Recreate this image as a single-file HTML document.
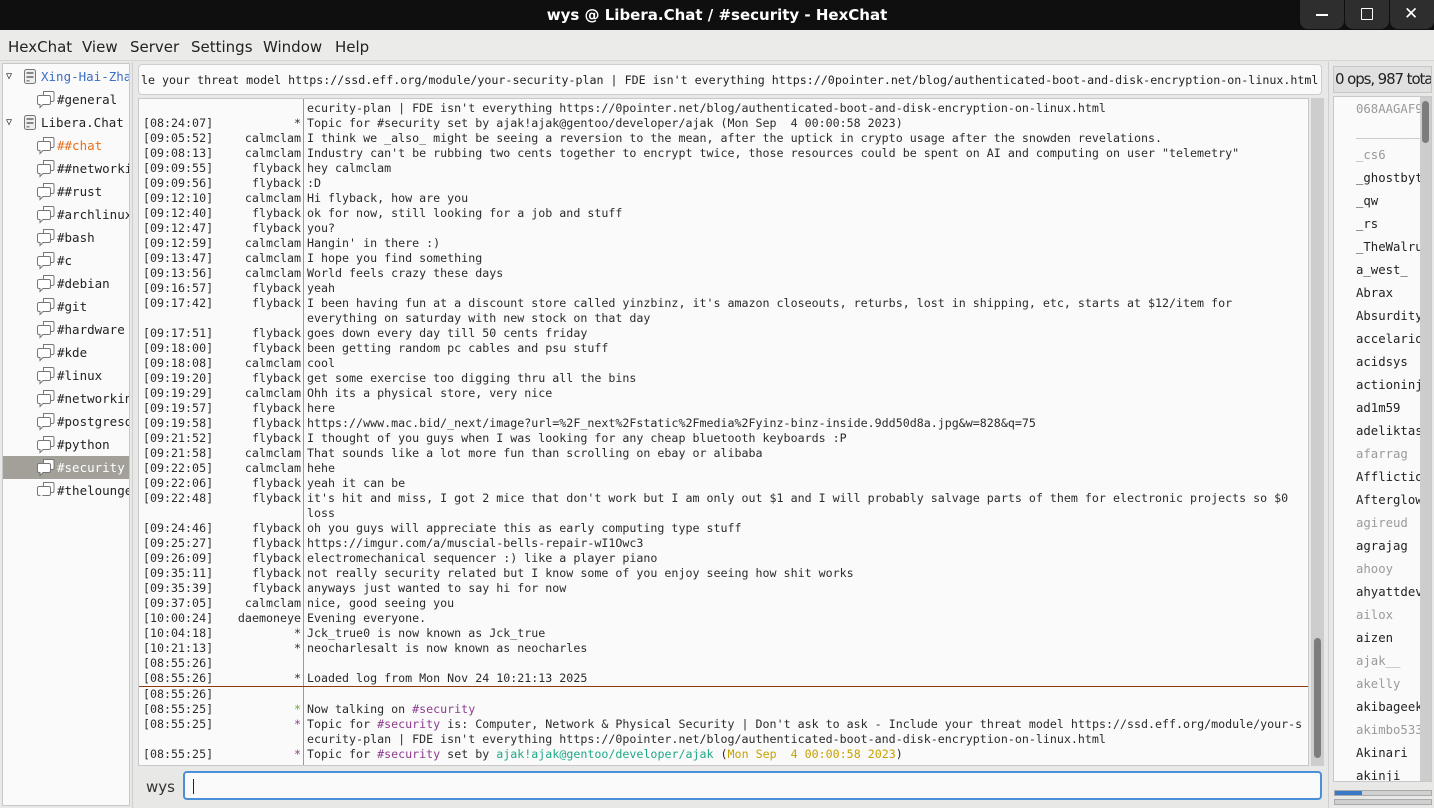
<!DOCTYPE html>
<html><head><meta charset="utf-8"><style>
*{margin:0;padding:0;box-sizing:border-box}
body{width:1434px;height:808px;overflow:hidden;background:#e8e8e7;font-family:"DejaVu Sans Mono","Liberation Mono",monospace;position:relative}
.abs{position:absolute}
#title{left:0;top:0;width:1434px;height:30px;background:#0f0f0f;color:#fff;font:bold 15px "DejaVu Sans","Liberation Sans",sans-serif;text-align:center;line-height:30px}
.wb{position:absolute;top:0;width:44px;height:29px;background:#2e2e2e;border-radius:0 0 8px 8px}
#menu{left:0;top:30px;width:1434px;height:31px;font:15px "DejaVu Sans","Liberation Sans",sans-serif;color:#222;background:#ebebea;border-bottom:1px solid #d6d6d6}
#menu span{position:absolute;top:8px}
#tree{left:2px;top:63px;width:128px;height:743px;background:#fafafa;border:1px solid #c8c8c8;overflow:hidden;font-size:12.5px;color:#222}
.ti{position:absolute;height:23px;line-height:23px;white-space:nowrap}
.ico{position:absolute}
#topic{left:138px;top:64px;width:1184px;height:31px;background:#fafafa;border:1px solid #cfcfcf;border-radius:4px;font-size:11.65px;line-height:30px;padding-left:2px;white-space:nowrap;overflow:hidden;color:#222}
#chat{left:138px;top:98px;width:1171px;height:668px;background:#fafafa;border:1px solid #c8c8c8;overflow:hidden;font-size:11.65px;color:#2b2b2b}
#sep{position:absolute;left:164px;top:0;width:1px;height:668px;background:#9a9a9a}
.r{position:absolute;height:15px;line-height:15px;white-space:pre;left:0;width:1170px;margin-top:1px}
.t{position:absolute;left:4px}
.n{position:absolute;right:1008px;text-align:right}
.m{position:absolute;left:168px}
.p{color:#8e3c8e}.g{color:#6aaa2a}.tl{color:#20a888}.y{color:#c8a000}
#vs{left:1311px;top:98px;width:13px;height:668px;background:#cdcdcd}
#input{left:183px;top:771px;width:1139px;height:29px;background:#fafafa;border:2px solid #4a90d9;border-radius:4px}
#ul{left:1333px;top:96px;width:99px;height:686px;background:#fafafa;border:1px solid #c8c8c8;overflow:hidden;font-size:12.3px}
.u{position:absolute;left:22px;height:23px;line-height:23px;white-space:nowrap;color:#222}
.gr{color:#9a9a9a}
</style></head><body>
<div id="title" class="abs">wys @ Libera.Chat / #security - HexChat</div>
<div class="wb" style="left:1300px"><div class="abs" style="left:16px;top:14px;width:12px;height:1.5px;background:#fff"></div></div>
<div class="wb" style="left:1345px"><div class="abs" style="left:16px;top:8px;width:12px;height:12px;border:1.5px solid #fff;border-radius:1px"></div></div>
<div class="wb" style="left:1390px"><div class="abs" style="left:14px;top:4px;color:#fff;font:17px 'DejaVu Sans',sans-serif">✕</div></div>
<div id="menu" class="abs"><span style="left:8px">HexChat</span><span style="left:82px">View</span><span style="left:130px">Server</span><span style="left:191px">Settings</span><span style="left:263px">Window</span><span style="left:335px">Help</span></div>
<div class="abs" style="left:132px;top:62px;width:1px;height:746px;background:#cfcfcf"></div>
<div class="abs" style="left:1328px;top:62px;width:1px;height:746px;background:#cfcfcf"></div>

<div id="tree" class="abs">
<div class="ti" style="left:3px;top:1px;font-size:10px">▽</div>
<svg class="ico" style="left:20px;top:5px" width="15" height="16"><rect x="1.5" y="0.5" width="11" height="14" rx="2" fill="#eee" stroke="#777"/><rect x="3.5" y="3" width="7" height="2" fill="#888"/><rect x="3.5" y="7" width="7" height="2" fill="#888"/><rect x="3.5" y="11" width="3" height="1.5" fill="#888"/></svg>
<div class="ti" style="left:38px;top:1px;color:#3a6fc4">Xing-Hai-Zhan</div>
<div class="ti" style="left:3px;top:47px;font-size:10px">▽</div>
<svg class="ico" style="left:20px;top:51px" width="15" height="16"><rect x="1.5" y="0.5" width="11" height="14" rx="2" fill="#eee" stroke="#777"/><rect x="3.5" y="3" width="7" height="2" fill="#888"/><rect x="3.5" y="7" width="7" height="2" fill="#888"/><rect x="3.5" y="11" width="3" height="1.5" fill="#888"/></svg>
<div class="ti" style="left:38px;top:47px">Libera.Chat</div>
<div class="abs" style="left:0;top:392px;width:128px;height:23px;background:#a39f99"></div>
<svg class="ico" style="left:34px;top:27px" width="18" height="405">
<defs><g id="b"><path d="M6.5 0.5h9a1.5 1.5 0 0 1 1.5 1.5v7a1.5 1.5 0 0 1-1.5 1.5h-9z" fill="#fff" stroke="#777"/><path d="M2 4.5h10a1.5 1.5 0 0 1 1.5 1.5v6a1.5 1.5 0 0 1-1.5 1.5H6l-3 3v-3H2a1.5 1.5 0 0 1-1.5-1.5V6A1.5 1.5 0 0 1 2 4.5z" fill="#fff" stroke="#777"/></g></defs>
<use href="#b" y="0"/><use href="#b" y="46"/><use href="#b" y="69"/><use href="#b" y="92"/><use href="#b" y="115"/><use href="#b" y="138"/><use href="#b" y="161"/><use href="#b" y="184"/><use href="#b" y="207"/><use href="#b" y="230"/><use href="#b" y="253"/><use href="#b" y="276"/><use href="#b" y="299"/><use href="#b" y="322"/><use href="#b" y="345"/><use href="#b" y="368"/><use href="#b" y="391"/>
</svg>
<div class="ti" style="left:54px;top:24px">#general</div>
<div class="ti" style="left:54px;top:70px;color:#e8701a">##chat</div>
<div class="ti" style="left:54px;top:93px">##networking</div>
<div class="ti" style="left:54px;top:116px">##rust</div>
<div class="ti" style="left:54px;top:139px">#archlinux</div>
<div class="ti" style="left:54px;top:162px">#bash</div>
<div class="ti" style="left:54px;top:185px">#c</div>
<div class="ti" style="left:54px;top:208px">#debian</div>
<div class="ti" style="left:54px;top:231px">#git</div>
<div class="ti" style="left:54px;top:254px">#hardware</div>
<div class="ti" style="left:54px;top:277px">#kde</div>
<div class="ti" style="left:54px;top:300px">#linux</div>
<div class="ti" style="left:54px;top:323px">#networking</div>
<div class="ti" style="left:54px;top:346px">#postgresql</div>
<div class="ti" style="left:54px;top:369px">#python</div>
<div class="ti" style="left:54px;top:392px;color:#fff">#security</div>
<div class="ti" style="left:54px;top:415px">#thelounge</div>
</div>

<div id="topic" class="abs">le your threat model https://ssd.eff.org/module/your-security-plan | FDE isn't everything https://0pointer.net/blog/authenticated-boot-and-disk-encryption-on-linux.html</div>

<div id="chat" class="abs">
<div id="sep"></div>
<div class="r" style="top:1px"><span class="m">ecurity-plan | FDE isn't everything https://0pointer.net/blog/authenticated-boot-and-disk-encryption-on-linux.html</span></div>
<div class="r" style="top:16px"><span class="t">[08:24:07]</span><span class="n">*</span><span class="m">Topic for #security set by ajak!ajak@gentoo/developer/ajak (Mon Sep  4 00:00:58 2023)</span></div>
<div class="r" style="top:31px"><span class="t">[09:05:52]</span><span class="n">calmclam</span><span class="m">I think we _also_ might be seeing a reversion to the mean, after the uptick in crypto usage after the snowden revelations.</span></div>
<div class="r" style="top:46px"><span class="t">[09:08:13]</span><span class="n">calmclam</span><span class="m">Industry can't be rubbing two cents together to encrypt twice, those resources could be spent on AI and computing on user "telemetry"</span></div>
<div class="r" style="top:61px"><span class="t">[09:09:55]</span><span class="n">flyback</span><span class="m">hey calmclam</span></div>
<div class="r" style="top:76px"><span class="t">[09:09:56]</span><span class="n">flyback</span><span class="m">:D</span></div>
<div class="r" style="top:91px"><span class="t">[09:12:10]</span><span class="n">calmclam</span><span class="m">Hi flyback, how are you</span></div>
<div class="r" style="top:106px"><span class="t">[09:12:40]</span><span class="n">flyback</span><span class="m">ok for now, still looking for a job and stuff</span></div>
<div class="r" style="top:121px"><span class="t">[09:12:47]</span><span class="n">flyback</span><span class="m">you?</span></div>
<div class="r" style="top:136px"><span class="t">[09:12:59]</span><span class="n">calmclam</span><span class="m">Hangin' in there :)</span></div>
<div class="r" style="top:151px"><span class="t">[09:13:47]</span><span class="n">calmclam</span><span class="m">I hope you find something</span></div>
<div class="r" style="top:166px"><span class="t">[09:13:56]</span><span class="n">calmclam</span><span class="m">World feels crazy these days</span></div>
<div class="r" style="top:181px"><span class="t">[09:16:57]</span><span class="n">flyback</span><span class="m">yeah</span></div>
<div class="r" style="top:196px"><span class="t">[09:17:42]</span><span class="n">flyback</span><span class="m">I been having fun at a discount store called yinzbinz, it's amazon closeouts, returbs, lost in shipping, etc, starts at $12/item for</span></div>
<div class="r" style="top:211px"><span class="m">everything on saturday with new stock on that day</span></div>
<div class="r" style="top:226px"><span class="t">[09:17:51]</span><span class="n">flyback</span><span class="m">goes down every day till 50 cents friday</span></div>
<div class="r" style="top:241px"><span class="t">[09:18:00]</span><span class="n">flyback</span><span class="m">been getting random pc cables and psu stuff</span></div>
<div class="r" style="top:256px"><span class="t">[09:18:08]</span><span class="n">calmclam</span><span class="m">cool</span></div>
<div class="r" style="top:271px"><span class="t">[09:19:20]</span><span class="n">flyback</span><span class="m">get some exercise too digging thru all the bins</span></div>
<div class="r" style="top:286px"><span class="t">[09:19:29]</span><span class="n">calmclam</span><span class="m">Ohh its a physical store, very nice</span></div>
<div class="r" style="top:301px"><span class="t">[09:19:57]</span><span class="n">flyback</span><span class="m">here</span></div>
<div class="r" style="top:316px"><span class="t">[09:19:58]</span><span class="n">flyback</span><span class="m">https://www.mac.bid/_next/image?url=%2F_next%2Fstatic%2Fmedia%2Fyinz-binz-inside.9dd50d8a.jpg&amp;w=828&amp;q=75</span></div>
<div class="r" style="top:331px"><span class="t">[09:21:52]</span><span class="n">flyback</span><span class="m">I thought of you guys when I was looking for any cheap bluetooth keyboards :P</span></div>
<div class="r" style="top:346px"><span class="t">[09:21:58]</span><span class="n">calmclam</span><span class="m">That sounds like a lot more fun than scrolling on ebay or alibaba</span></div>
<div class="r" style="top:361px"><span class="t">[09:22:05]</span><span class="n">calmclam</span><span class="m">hehe</span></div>
<div class="r" style="top:376px"><span class="t">[09:22:06]</span><span class="n">flyback</span><span class="m">yeah it can be</span></div>
<div class="r" style="top:391px"><span class="t">[09:22:48]</span><span class="n">flyback</span><span class="m">it's hit and miss, I got 2 mice that don't work but I am only out $1 and I will probably salvage parts of them for electronic projects so $0</span></div>
<div class="r" style="top:406px"><span class="m">loss</span></div>
<div class="r" style="top:421px"><span class="t">[09:24:46]</span><span class="n">flyback</span><span class="m">oh you guys will appreciate this as early computing type stuff</span></div>
<div class="r" style="top:436px"><span class="t">[09:25:27]</span><span class="n">flyback</span><span class="m">https://imgur.com/a/muscial-bells-repair-wI1Owc3</span></div>
<div class="r" style="top:451px"><span class="t">[09:26:09]</span><span class="n">flyback</span><span class="m">electromechanical sequencer :) like a player piano</span></div>
<div class="r" style="top:466px"><span class="t">[09:35:11]</span><span class="n">flyback</span><span class="m">not really security related but I know some of you enjoy seeing how shit works</span></div>
<div class="r" style="top:481px"><span class="t">[09:35:39]</span><span class="n">flyback</span><span class="m">anyways just wanted to say hi for now</span></div>
<div class="r" style="top:496px"><span class="t">[09:37:05]</span><span class="n">calmclam</span><span class="m">nice, good seeing you</span></div>
<div class="r" style="top:511px"><span class="t">[10:00:24]</span><span class="n">daemoneye</span><span class="m">Evening everyone.</span></div>
<div class="r" style="top:526px"><span class="t">[10:04:18]</span><span class="n">*</span><span class="m">Jck_true0 is now known as Jck_true</span></div>
<div class="r" style="top:541px"><span class="t">[10:21:13]</span><span class="n">*</span><span class="m">neocharlesalt is now known as neocharles</span></div>
<div class="r" style="top:556px"><span class="t">[08:55:26]</span></div>
<div class="r" style="top:571px"><span class="t">[08:55:26]</span><span class="n">*</span><span class="m">Loaded log from Mon Nov 24 10:21:13 2025</span></div>
<div class="abs" style="left:0;top:587px;width:1171px;height:1px;background:#8b3a10"></div>
<div class="r" style="top:587px"><span class="t">[08:55:26]</span></div>
<div class="r" style="top:602px"><span class="t">[08:55:25]</span><span class="n g">*</span><span class="m">Now talking on <span class="p">#security</span></span></div>
<div class="r" style="top:617px"><span class="t">[08:55:25]</span><span class="n p">*</span><span class="m">Topic for <span class="p">#security</span> is: Computer, Network &amp; Physical Security | Don't ask to ask - Include your threat model https://ssd.eff.org/module/your-s</span></div>
<div class="r" style="top:632px"><span class="m">ecurity-plan | FDE isn't everything https://0pointer.net/blog/authenticated-boot-and-disk-encryption-on-linux.html</span></div>
<div class="r" style="top:647px"><span class="t">[08:55:25]</span><span class="n p">*</span><span class="m">Topic for <span class="p">#security</span> set by <span class="tl">ajak!ajak@gentoo/developer/ajak</span> (<span class="y">Mon Sep  4 00:00:58 2023</span>)</span></div>
</div>
<div id="vs" class="abs"><div class="abs" style="left:3px;top:540px;width:7px;height:120px;background:#7d7d7d;border-radius:4px"></div></div>

<div class="abs" style="left:146px;top:778px;font:15px 'DejaVu Sans','Liberation Sans',sans-serif;color:#333">wys</div>
<div id="input" class="abs"><div class="abs" style="left:8px;top:6px;width:1px;height:15px;background:#222"></div></div>

<div class="abs" style="left:1333px;top:66px;width:99px;height:27px;background:#e0e0e0;border:1px solid #c8c8c8;font:15px 'DejaVu Sans','Liberation Sans',sans-serif;color:#222;line-height:25px;padding-left:1px;white-space:nowrap;overflow:hidden;letter-spacing:-1.1px">0 ops, 987 total</div>
<div id="ul" class="abs">
<div class="u gr" style="top:1px">068AAGAF9</div>
<div class="u gr" style="top:24px">__________</div>
<div class="u gr" style="top:47px">_cs6</div>
<div class="u" style="top:70px">_ghostbyte</div>
<div class="u" style="top:93px">_qw</div>
<div class="u" style="top:116px">_rs</div>
<div class="u" style="top:139px">_TheWalrus</div>
<div class="u" style="top:162px">a_west_</div>
<div class="u" style="top:185px">Abrax</div>
<div class="u" style="top:208px">Absurdity</div>
<div class="u" style="top:231px">accelarion</div>
<div class="u" style="top:254px">acidsys</div>
<div class="u" style="top:277px">actioninja</div>
<div class="u" style="top:300px">ad1m59</div>
<div class="u" style="top:323px">adeliktas</div>
<div class="u gr" style="top:346px">afarrag</div>
<div class="u" style="top:369px">Affliction</div>
<div class="u" style="top:392px">Afterglow</div>
<div class="u gr" style="top:415px">agireud</div>
<div class="u" style="top:438px">agrajag</div>
<div class="u gr" style="top:461px">ahooy</div>
<div class="u" style="top:484px">ahyattdev</div>
<div class="u gr" style="top:507px">ailox</div>
<div class="u" style="top:530px">aizen</div>
<div class="u gr" style="top:553px">ajak__</div>
<div class="u gr" style="top:576px">akelly</div>
<div class="u" style="top:599px">akibageek</div>
<div class="u gr" style="top:622px">akimbo533</div>
<div class="u" style="top:645px">Akinari</div>
<div class="u" style="top:668px">akinji</div>
<div class="abs" style="left:86px;top:0;width:12px;height:686px;background:#cdcdcd"><div class="abs" style="left:2px;top:4px;width:7px;height:42px;background:#7d7d7d;border-radius:4px"></div></div>
</div>
<div class="abs" style="left:1334px;top:790px;width:98px;height:6px;background:#d0d0d0;border:1px solid #aaa"><div style="width:27px;height:4px;background:#3a78c8"></div></div>
<div class="abs" style="left:1334px;top:799px;width:98px;height:6px;background:#d0d0d0;border:1px solid #aaa"></div>
</body></html>
